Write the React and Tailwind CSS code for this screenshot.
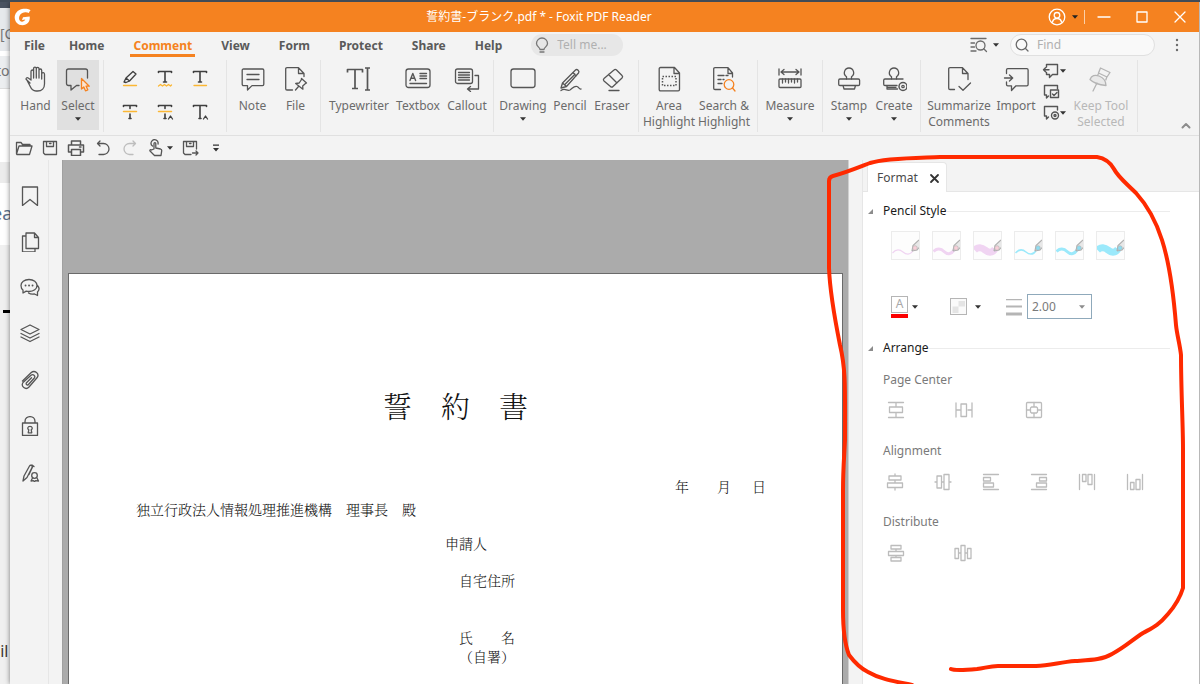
import React from "react";

const INK = "#555555";
const MUTED = "#b4b4b4";
const AMBER = "#fbb734";
const ORANGE = "#f58220";

function Icon({ w = 26, h = 26, color = INK, sw = 1.3, children, className = "" }) {
  return (
    <svg
      width={w}
      height={h}
      viewBox={`0 0 ${w} ${h}`}
      fill="none"
      stroke={color}
      strokeWidth={sw}
      strokeLinecap="round"
      strokeLinejoin="round"
      aria-hidden="true"
      className={`shrink-0 ${className}`}
    >
      {children}
    </svg>
  );
}

function Caret({ color = "#333333" }) {
  return (
    <svg width="6" height="4" viewBox="0 0 6 4" fill={color} aria-hidden="true" className="shrink-0">
      <path d="M0 0.3h6L3 3.8z" />
    </svg>
  );
}

/* ---------- ribbon icons (26 x 26) ---------- */

const HandIcon = () => (
  <Icon>
    <path d="M6 17 2.3 13.6C1.4 12.7 2.8 11 4.2 12L7 14V5.5c0-2 2.6-2 2.6 0V12M9.6 5V2.600c0-2 2.700-2 2.700 0V12M12.300 2.800c0-2 2.700-2 2.700 0V12M15 4.500c0-2 2.700-2 2.700 0V13M17.700 7.800c.5-1.800 2.800-1.300 2.800.5V18c0 4-2.500 7-7 7h-1.500c-3.500 0-4.700-2-6-5L3 14.200" transform="translate(1 0)" />
  </Icon>
);
const SelectIcon = () => (
  <Icon>
    <path d="M14 19.500h-2.500L6 24v-4.500H3.500c-1.200 0-2-.8-2-2V5c0-1.200.8-2 2-2h17c1.200 0 2 .8 2 2v7" />
    <path stroke={ORANGE} fill="#fbe5d3" d="M16.500 12.500v10.500l2.300-2 1.700 3.800 2.300-1-1.700-3.600h3.200z" />
  </Icon>
);
const NoteIcon = () => (
  <Icon>
    <path d="M3.500 3h19c.8 0 1.300.5 1.300 1.300v14c0 .8-.5 1.300-1.300 1.300h-10.500L7.500 24v-4.400h-4c-.8 0-1.300-.5-1.300-1.300v-14c0-.8.5-1.300 1.300-1.300zM7 8.500h12M7 13.500h12" />
  </Icon>
);
const FileIcon = () => (
  <Icon>
    <path d="M9.500 24H4c-.8 0-1.300-.5-1.300-1.300V3c0-.8.5-1.300 1.300-1.300h11.500L21 7.500v3M15.500 1.700v5.800H21" />
    <path d="m18.500 12.500 5 4.500-1.300.7-2.500 2.200.2 3.300-7.200-5.700 3.500-.5 2-3zM15.500 20.500 12.500 24" />
  </Icon>
);
const TypewriterIcon = () => (
  <Icon w={28} sw={1.7}>
    <path strokeLinecap="butt" d="M2.500 6.500V3.500h15v3M10 3.500v19M7 22.500h6M20 2h5M20 24h5M22.500 2v22" />
  </Icon>
);
const TextboxIcon = () => (
  <Icon>
    <rect x="1" y="3" width="24" height="18.500" rx="2.500" />
    <path strokeWidth="1.400" d="m5 14.500 2.800-7 2.800 7M6.200 12.300h3.400M15 7.500h6.500M15 10h6.500M15 12.500h6.500M5 17.500h16.500" />
  </Icon>
);
const CalloutIcon = () => (
  <Icon>
    <rect x="1.500" y="3" width="17" height="14.500" rx="2" />
    <path d="M4.500 6.500h11M4.500 9h11M4.500 11.500h11M4.500 14h11M21 9.500h3.500V23H13.500M16.500 20.500 13.500 23l3 2.500" />
  </Icon>
);
const DrawingIcon = () => (
  <Icon>
    <rect x="1" y="3" width="24" height="18.500" rx="2.500" />
  </Icon>
);
const PencilIcon = () => (
  <Icon>
    <path d="m5.500 17 13-13c1.500-1.500 4.500 1 3 3L9.500 20.500 4 22zM5.500 17l4 3.500M15.800 6.500l3.500 3.300M8.300 18 18 8.200M4 24.500c4-3 6 1 9-.5 2.500-1.500 4-4.500 7-3.500 2 .7 2 3 4 2.500" />
  </Icon>
);
const EraserIcon = () => (
  <Icon>
    <path d="m15 4c.8-.8 1.700-.8 2.500 0l5.500 5.500c.8.8.8 1.700 0 2.500L14 20.500c-.8.800-1.700.8-2.500 0L5 15c-.8-.8-.8-1.700 0-2.500zM9.500 8.500l8.500 8.500M10 24.500h10" />
  </Icon>
);
const AreaIcon = () => (
  <Icon>
    <path d="M4.500 1.500h14L23.500 7v16.500c0 .8-.5 1.300-1.300 1.300H4.500c-.8 0-1.300-.5-1.300-1.300V2.800c0-.8.5-1.300 1.300-1.300zM18 1.500V7.500h5.500" />
    <rect x="6.500" y="10.500" width="13.500" height="9" strokeDasharray="1.500 1.500" strokeLinecap="butt" strokeWidth="1.500" />
  </Icon>
);
const SearchHighlightIcon = () => (
  <Icon>
    <path d="M9.500 23.500H4c-.8 0-1.300-.5-1.300-1.300V3c0-.8.5-1.300 1.300-1.300h13L21.500 7v4M17 1.700V7.500h4.500M7 9.500h6M15 9.500h2M7 13.500h3M12 13.500h1M7 17.500h4" />
    <circle cx="18" cy="18.500" r="4.800" stroke={ORANGE} />
    <path stroke={ORANGE} d="m21.500 22 2.500 3" />
  </Icon>
);
const MeasureIcon = () => (
  <Icon>
    <path d="M2 3v6M24 3v6M4 6h18M7 3.500 4 6l3 2.500M19 3.500 22 6l-3 2.500" />
    <rect x="2" y="13" width="22" height="8.500" rx="1" />
    <path d="M5.500 13v4M8.500 13v3M11.500 13v4M14.500 13v3M17.500 13v4M20.500 13v3" />
  </Icon>
);
const StampIcon = ({ gear }) => (
  <Icon>
    <path d="M10.500 13v-2.300C6.500 8 8.500 2 13 2s6.500 6 2.500 8.700V13" />
    {gear ? (
      <>
        <path d="M16 19.500H4c-.8 0-1.300-.5-1.300-1.300V14.300c0-.8.5-1.300 1.300-1.300h18M6 19.500V23h10.500M6 21.300h9" />
        <circle cx="22" cy="20.500" r="4" strokeWidth="1.500" />
        <circle cx="22" cy="20.500" r="1.200" />
      </>
    ) : (
      <path d="M4 13h18.300c.8 0 1.300.5 1.300 1.300v3.900c0 .8-.5 1.300-1.300 1.300H4c-.8 0-1.300-.5-1.300-1.300v-3.900c0-.8.500-1.300 1.300-1.300zM7 19.500 8 23h10.500l1-3.500" />
    )}
  </Icon>
);
const SummarizeIcon = () => (
  <Icon>
    <path d="M8.500 23.500H4c-.8 0-1.300-.5-1.300-1.300V3c0-.8.500-1.300 1.300-1.300h12.500L22 7.500v6M16.500 1.700v5.800H22M13 20.500l4 3.800L24.500 17" />
  </Icon>
);
const ImportIcon = () => (
  <Icon>
    <path d="M3.500 7.500V4c0-.8.5-1.300 1.300-1.300h19c.8 0 1.300.5 1.300 1.300v14.500c0 .8-.5 1.300-1.300 1.300H13L8.500 24.500v-4.700H4.800c-.8 0-1.300-.5-1.300-1.300V16M1.500 12h8M6.500 9l3.200 3-3.200 3" />
  </Icon>
);
const PinIcon = () => (
  <Icon color={MUTED}>
    <path d="m12.500 2 9.500 4.500-3 4.500-8.500-4zM10.800 7 9.500 9.500M18.800 11l-1 3" />
    <path fill="#e9e9e9" d="M2 13.500c1.500-4 5-5 9-3.500s7 4 7 9.500c-5.500-.5-12-2-16-6z" />
    <path d="M9 17 5 25" />
  </Icon>
);

/* ---------- small comment icons ---------- */

const ExportSmall = () => (
  <Icon w={18} h={16} sw={1.400}>
    <path d="M4.500 4V1.500h11v10h-5L7.500 14.500v-3H4.500V9.500M1.500 6.700h5.500M3.500 4.700l-2 2 2 2" />
  </Icon>
);
const PopupSmall = () => (
  <Icon w={18} h={16} sw={1.400}>
    <path d="M15.500 5V1.500h-13v9.500h2v3l2-2" />
    <rect x="8.500" y="6" width="8" height="7.500" />
    <path d="m10.500 10 1.500 1.500 3-3" />
  </Icon>
);
const ManageSmall = () => (
  <Icon w={18} h={16} sw={1.400}>
    <path d="M15.500 5V1.500h-13v9.500h2v3l2-2" />
    <circle cx="13" cy="10.500" r="3.500" />
    <circle cx="13" cy="10.500" r="1" />
  </Icon>
);

/* ---------- text mark-up icons (18 x 18) ---------- */

const markups = [
  {
    name: "Highlight",
    art: (
      <>
        <path d="m5 9 7-6.500 3 2.500-6.500 7zM5 9l3.500 3M3 13l2-4 3.500 3-3.500 1.500z" />
        <path stroke={AMBER} d="M2.500 16.500h13" />
      </>
    ),
  },
  {
    name: "Squiggly underline",
    art: (
      <>
        <path strokeWidth="1.600" d="M2.500 3.500V2.500h13v1M9 2.500V13M7.500 13h3" />
        <path stroke={AMBER} d="m2.500 17 2-1.500 2 1.500 2-1.500 2 1.500 2-1.500 2 1.500 1-1" />
      </>
    ),
  },
  {
    name: "Underline",
    art: (
      <>
        <path strokeWidth="1.600" d="M2.500 3.500V2.500h13v1M9 2.500V13M7.500 13h3" />
        <path stroke={AMBER} d="M3 16.500h12.500" />
      </>
    ),
  },
  {
    name: "Strikeout",
    art: (
      <>
        <path strokeWidth="1.600" d="M2.500 3.500V2.500h13v1M9 2.500V5.500M9 11v4M8 15.500h2" />
        <path stroke={AMBER} strokeWidth="1.500" d="M2.500 8.500h13" />
      </>
    ),
  },
  {
    name: "Replace text",
    art: (
      <>
        <path strokeWidth="1.600" d="M2.500 3.500V2.500h13v1M9 2.500V5.500M9 11v4M8 15.500h2" />
        <path d="m12.500 16 2-3 2 3" />
        <path stroke={AMBER} strokeWidth="1.500" d="M2.500 8.500h13" />
      </>
    ),
  },
  {
    name: "Insert text",
    art: (
      <>
        <path strokeWidth="1.600" d="M2.500 3.500V2.500h13v1M9 2.500v13M8 15.500h2" />
        <path d="m12.500 16 2-3 2 3" />
      </>
    ),
  },
];

/* ---------- ribbon ---------- */

function Tool({ icon, label, width, caret, active, disabled }) {
  return (
    <button
      type="button"
      disabled={disabled}
      className={`flex h-[70px] flex-col items-center pt-[6px] text-[12px] leading-4 ${width} ${
        active ? "bg-[#e0e0e0]" : ""
      } ${disabled ? "text-[#b8b8b8]" : "text-[#6b6b6b]"}`}
    >
      {icon}
      <span className="mt-[6px] text-center whitespace-pre">{label}</span>
      {caret && (
        <span className="mt-[3px]">
          <Caret />
        </span>
      )}
    </button>
  );
}

function Group({ className = "", children }) {
  return <div className={`flex h-[72px] shrink-0 border-r border-[#e4e4e4] ${className}`}>{children}</div>;
}

function Ribbon() {
  return (
    <div className="flex h-[76px] border-b border-[#e0e0e0]">
      <Group className="w-[94px] pl-1">
        <Tool icon={<HandIcon />} label="Hand" width="w-[43px]" />
        <Tool icon={<SelectIcon />} label="Select" width="w-[42px]" caret active />
      </Group>
      <Group className="w-[123px] justify-center pt-[9px]">
        <div className="grid h-[52px] grid-cols-3 content-between gap-x-[17px]">
          {markups.map((m) => (
            <button key={m.name} type="button" aria-label={m.name} className="block">
              <Icon w={18} h={18} color="#3f3f3f">
                {m.art}
              </Icon>
            </button>
          ))}
        </div>
      </Group>
      <Group className="w-[94px] pl-1">
        <Tool icon={<NoteIcon />} label="Note" width="w-[43px]" />
        <Tool icon={<FileIcon />} label="File" width="w-[43px]" />
      </Group>
      <Group className="w-[173px] pl-2">
        <Tool icon={<TypewriterIcon />} label="Typewriter" width="w-[60px]" />
        <Tool icon={<TextboxIcon />} label="Textbox" width="w-[58px]" />
        <Tool icon={<CalloutIcon />} label="Callout" width="w-[40px]" />
      </Group>
      <Group className="w-[145px] pl-1">
        <Tool icon={<DrawingIcon />} label="Drawing" width="w-[50px]" caret />
        <Tool icon={<PencilIcon />} label="Pencil" width="w-[44px]" />
        <Tool icon={<EraserIcon />} label="Eraser" width="w-[40px]" />
      </Group>
      <Group className="w-[119px] pl-1">
        <Tool icon={<AreaIcon />} label={"Area\nHighlight"} width="w-[52px]" />
        <Tool icon={<SearchHighlightIcon />} label={"Search &\nHighlight"} width="w-[58px]" />
      </Group>
      <Group className="w-[65px] justify-center">
        <Tool icon={<MeasureIcon />} label="Measure" width="w-[60px]" caret />
      </Group>
      <Group className="w-[98px] pl-1">
        <Tool icon={<StampIcon />} label="Stamp" width="w-[44px]" caret />
        <Tool icon={<StampIcon gear />} label="Create" width="w-[46px]" caret />
      </Group>
      <Group className="w-[217px] pl-[3px]">
        <Tool icon={<SummarizeIcon />} label={"Summarize\nComments"} width="w-[70px]" />
        <Tool icon={<ImportIcon />} label="Import" width="w-[44px]" />
        <div className="flex w-[32px] flex-col gap-[5px] pt-[3px] pl-1">
          <button type="button" aria-label="Export comments" className="flex items-center">
            <ExportSmall />
            <Caret />
          </button>
          <button type="button" aria-label="Comment pop-ups" className="flex items-center">
            <PopupSmall />
          </button>
          <button type="button" aria-label="Manage comments" className="flex items-center">
            <ManageSmall />
            <Caret />
          </button>
        </div>
        <Tool icon={<PinIcon />} label={"Keep Tool\nSelected"} width="w-[62px]" disabled />
      </Group>
      <div className="flex flex-1 items-end justify-end pr-2 pb-[6px]">
        <button type="button" aria-label="Collapse ribbon">
          <Icon w={10} h={7} color="#8c8c8c" sw={2}>
            <path d="M1.500 5.500 5 2l3.500 3.500" />
          </Icon>
        </button>
      </div>
    </div>
  );
}

/* ---------- title bar and menu ---------- */

function TitleBar() {
  return (
    <header className="flex h-[30px] items-center bg-[#f58220] text-white">
      <svg width="24" height="20" viewBox="0 0 24 20" aria-hidden="true" className="shrink-0">
        <path
          fill="#fff"
          d="M20.600 3.200C18 1.700 15 1.400 12 2 7.500 3 4.700 6.500 4.700 10.500c0 4.500 3.500 7.700 7.700 7.700 4.800 0 8-3.700 7.300-8.700l-6.700.8-1 2.600 3.300-.3c-.8 1.500-2 2.200-3.500 2.100-2-.2-3-2-2.700-4.200.4-3 3-5.200 6-5.300 1.500-.1 2.700.2 3.700.8.300-1.200 1-2.200 1.800-2.800z"
        />
      </svg>
      <h1 className="flex-1 text-center text-[12px] leading-4">誓約書-ブランク.pdf * - Foxit PDF Reader</h1>
      <div className="flex h-full items-center">
        <button type="button" aria-label="Account" className="flex items-center gap-[6px] pr-[6px] pl-1">
          <Icon w={18} h={18} color="#fff" sw={1.300}>
            <circle cx="9" cy="9" r="7.800" />
            <circle cx="9" cy="7.300" r="2.800" />
            <path d="M4.500 14c.5-2.500 2.300-3.500 4.500-3.500s4 1 4.500 3.500" />
          </Icon>
          <Caret color="#222" />
        </button>
        <span className="h-[14px] w-px bg-[#fbd0a8]" />
        <button type="button" aria-label="Minimize" className="flex w-[38px] justify-center">
          <Icon w={14} h={14} color="#fff">
            <path d="M1 7h12" />
          </Icon>
        </button>
        <button type="button" aria-label="Maximize" className="flex w-[38px] justify-center">
          <Icon w={14} h={14} color="#fff">
            <path d="M2 2h10v10H2z" />
          </Icon>
        </button>
        <button type="button" aria-label="Close" className="flex w-[38px] justify-center">
          <Icon w={14} h={14} color="#fff">
            <path d="m2 2 10 10M12 2 2 12" />
          </Icon>
        </button>
      </div>
    </header>
  );
}

const menus = ["File", "Home", "Comment", "View", "Form", "Protect", "Share", "Help"];

function MenuBar() {
  return (
    <div className="flex h-[28px] items-center pb-[2px]">
      <nav className="flex gap-[23px] pl-[11px]">
        {menus.map((m) => (
          <button
            key={m}
            type="button"
            className={`border-b-[3px] px-[3px] pt-[5px] text-[12px] leading-4 font-bold first:-mr-[5px] ${
              m === "Comment" ? "border-[#f58220] text-[#f58220]" : "border-transparent text-[#5a5a5a]"
            }`}
          >
            {m}
          </button>
        ))}
      </nav>
      <label className="ml-[26px] flex h-[22px] w-[92px] items-center gap-2 rounded-full bg-[#e7e7e7] pl-1">
        <Icon w={14} h={16} color="#777">
          <path d="M5 12.500C5 10.500 1.500 9.500 1.500 6.500a5.500 5.500 0 0 1 11 0c0 3-3.500 4-3.500 6zM5 15h4" />
        </Icon>
        <input
          aria-label="Tell me"
          placeholder="Tell me..."
          className="w-[62px] min-w-0 bg-transparent text-[12px] leading-4 outline-none placeholder:text-[#b0b0b0]"
        />
      </label>
      <div className="ml-auto flex items-center">
        <button type="button" aria-label="Search options" className="mr-[11px] flex items-center gap-[5px]">
          <Icon w={18} h={16} color="#6b6b6b">
            <path d="M1 1.500h15M1 6h3.500M1 10h3.500M1 14h5" />
            <circle cx="10.500" cy="8.500" r="4.500" />
            <path d="m13.700 11.700 2.800 2.800" />
          </Icon>
          <Caret />
        </button>
        <label className="flex h-[22px] w-[145px] items-center gap-2 rounded-full border border-[#e0e0e0] bg-[#f9f9f9] pl-1">
          <Icon w={14} h={14} color="#6b6b6b">
            <circle cx="6.500" cy="6.500" r="5.300" />
            <path d="m10.500 10.500 2.500 2.500" />
          </Icon>
          <input
            aria-label="Find"
            placeholder="Find"
            className="w-[100px] min-w-0 bg-transparent text-[12px] leading-4 outline-none placeholder:text-[#b0b0b0]"
          />
        </label>
        <button type="button" aria-label="More" className="flex w-[44px] justify-center">
          <svg width="4" height="14" viewBox="0 0 4 14" fill="#6b6b6b" aria-hidden="true">
            <circle cx="2" cy="2" r="1.200" />
            <circle cx="2" cy="7" r="1.200" />
            <circle cx="2" cy="12" r="1.200" />
          </svg>
        </button>
      </div>
    </div>
  );
}

/* ---------- quick access bar ---------- */

function QuickBar() {
  const save = "M1.500 1.500h13v13h-11.500l-1.500-1.500zM4.500 1.500v5h7v-5M7.500 3.500h1.500";
  return (
    <div className="flex h-[24px] items-center gap-[9px] pl-[5px]">
      <button type="button" aria-label="Open">
        <Icon w={18} h={16}>
          <path d="M1.500 13.500v-11h4.500l1.500 2h7.500V6M1.500 14 4 6h13l-2.500 8.500H2z" />
        </Icon>
      </button>
      <button type="button" aria-label="Save">
        <Icon w={16} h={16}>
          <path d={save} />
        </Icon>
      </button>
      <button type="button" aria-label="Print">
        <Icon w={18} h={16} sw={1.500}>
          <path d="M4.500 5V1h9v4M4 12H1.500V5h15v7H14M4.500 9.500h9v6h-9zM12.500 7h1.500" />
        </Icon>
      </button>
      <button type="button" aria-label="Undo">
        <Icon w={18} h={16}>
          <path d="M6 1 3.500 3.500 6 6M4 3.500h5.500a5.300 5.300 0 0 1 0 11H5" />
        </Icon>
      </button>
      <button type="button" aria-label="Redo" disabled>
        <Icon w={18} h={16} color="#bdbdbd">
          <path d="M12 1l2.500 2.500L12 6M14 3.500H8.500a5.300 5.300 0 0 0 0 11H12" />
        </Icon>
      </button>
      <button type="button" aria-label="Touch mode" className="flex items-center gap-[3px]">
        <Icon w={16} h={18}>
          <path d="M4.500 7A3.500 3.500 0 1 1 10 5M6 10V4.500c0-1.200 1.800-1.200 1.800 0V9l4.700 1c1 .3 1.300 1 1.200 1.800l-.7 4.700H6.500L2 12c-.5-1 .8-1.700 1.500-1z" />
        </Icon>
        <Caret />
      </button>
      <button type="button" aria-label="Save as">
        <Icon w={18} h={16}>
          <path d="M9 14.500H3L1.500 13V1.500h13V9M4.500 1.500v5h7v-5M7.500 3.500h1.500M10.500 13h5.500M14 11l2 2-2 2" />
        </Icon>
      </button>
      <button type="button" aria-label="Customize" className="ml-1">
        <svg width="6" height="8" viewBox="0 0 6 8" fill="#333" aria-hidden="true">
          <path d="M0 0.500h6v1.200H0zM0 4h6L3 7.500z" />
        </svg>
      </button>
    </div>
  );
}

/* ---------- navigation strip ---------- */

const navItems = [
  { name: "Bookmarks", art: <path d="M2.500 1h15v18.500L10 13.500l-7.500 6z" /> },
  {
    name: "Pages",
    art: <path d="M6 1h8.500l4 4.500V16.500H6zM14.500 1v4.500h4M6 4H2.500v16H15v-3.500" />,
  },
  {
    name: "Comments",
    art: (
      <>
        <path d="M9 1.500c4.700 0 8 2.500 8 6s-3.300 6-8 6c-1 0-2-.1-2.800-.4L3 15v-3C1.500 11 1 9 1 7.500c0-3.500 3.300-6 8-6zM17.500 7.500c2.300 2.500 1.500 5 0 6.500v3.500L14.500 16c-3 .5-5-.3-6-1" />
        <path strokeWidth="1.800" d="M5.500 7.500h.1M9 7.500h.1M12.500 7.500h.1" />
      </>
    ),
  },
  { name: "Layers", art: <path d="m10 1 9 4.500L10 10 1 5.500zM1 9.500l9 4.500 9-4.500M1 13l9 4.500 9-4.500" /> },
  {
    name: "Attachments",
    art: (
      <path d="M2.500 11 11 2.800c3.700-3.300 9 1 6 5L9 17c-3.300 3.500-8.500-.5-6-4.500L11 5.300c2.200-1.700 4.800.7 3.300 2.700l-6.300 7M14.300 8 8.500 14.500c-1.500 1.300-3-.3-2-1.800l5-5" />
    ),
  },
  {
    name: "Security",
    art: (
      <path d="M2.500 7h15v12.500h-15zM5 7V5.500c0-6.500 10-6.500 10 0V7M10 10.300c2.700 0 2.700 2.700 1.200 3.500l.6 3H8.200l.6-3c-1.500-.8-1.500-3.500 1.200-3.500z" />
    ),
  },
  {
    name: "Signatures",
    art: (
      <>
        <path d="m3 19 1-5L9.500 4c1-1.500 3.500-.5 2.500 1.500L7 15.500zM13 4 9 12.500M12 3l2 1.500" />
        <circle cx="14.500" cy="13.500" r="2.800" />
        <path d="m12.500 16-1.500 3 2.500-.3 1 1 1-1 3 .3-1.500-3" />
      </>
    ),
  },
];

function NavStrip() {
  return (
    <nav className="flex w-[39px] shrink-0 flex-col items-center gap-[26px] border-r border-[#e6e6e6] pt-[26px] pl-[2px]">
      {navItems.map((n) => (
        <button key={n.name} type="button" aria-label={n.name} className="block">
          <Icon w={20} h={20}>
            {n.art}
          </Icon>
        </button>
      ))}
    </nav>
  );
}

/* ---------- document ---------- */

function DocumentView() {
  return (
    <main className="flex min-w-0 flex-1 flex-col border-l border-[#a0a0a0] bg-[#ababab] px-[5px] pt-[113px] text-[#111111]">
      <article className="flex-1 border border-b-0 border-[#6a6a6a] bg-white pt-[112px] font-light [font-family:'Noto_Serif_CJK_JP','Noto_Sans_CJK_JP',serif]">
        <h2 className="text-center text-[29px] leading-[40px]">誓　約　書</h2>
        <div className="flex justify-end pt-[50px] pr-[76px] text-[14px] leading-[20px]">
          <span>年　　月</span>
          <span className="pl-[21px]">日</span>
        </div>
        <p className="pt-[3px] pl-[67px] text-[14px] leading-[20px]">独立行政法人情報処理推進機構　理事長　殿</p>
        <p className="pt-[14px] pl-[376px] text-[14px] leading-[20px]">申請人</p>
        <p className="pt-[17px] pl-[390px] text-[14px] leading-[20px]">自宅住所</p>
        <p className="pt-[37px] pl-[390px] text-[14px] leading-[20px]">氏　　名</p>
        <p className="pl-[390px] text-[14px] leading-[18px]">（自署）</p>
      </article>
    </main>
  );
}

/* ---------- format panel ---------- */

const pencilStyles = [
  { name: "Thin pink", color: "#f0d4f2", width: 1.2, tip: "#f8cfd8", wave: "M0.500 21C4 17 8 17.500 11 20s7 3.500 10-1.500" },
  { name: "Medium pink", color: "#f0d4f2", width: 3, tip: "#f8cfd8", wave: "M0.500 19.500C4 16 8 16.500 11 19.500s7 3.500 10-1.500" },
  { name: "Thick pink", color: "#f0d4f2", width: 7, tip: "#f8cfd8", wave: "M0.500 18C4 14.500 8 15.500 11 18s7 3.500 10-1" },
  { name: "Thin cyan", color: "#9be9fb", width: 1.5, tip: "#8fdcf0", wave: "M0.500 21C4 17 8 17.500 11 20s7 3.500 10-1.500" },
  { name: "Medium cyan", color: "#9be9fb", width: 3, tip: "#8fdcf0", wave: "M0.500 19.500C4 16 8 16.500 11 19.500s7 3.500 10-1.500" },
  { name: "Thick cyan", color: "#9be9fb", width: 7, tip: "#8fdcf0", wave: "M0.500 18C4 14.500 8 15.500 11 18s7 3.500 10-1" },
];

function PencilSwatch({ item }) {
  return (
    <button type="button" aria-label={item.name} className="block size-[29px] border border-[#ececec] bg-[#fdfdfd]">
      <svg width="27" height="27" viewBox="0 0 27 27" fill="none" aria-hidden="true">
        <path d={item.wave} stroke={item.color} strokeWidth={item.width} />
        <path d="M21.500 13.500 27 8.500v6.500l-2 2.500z" fill="#e8e8e8" />
        <path d="M20 19l1-5.500L27 8M20 19l5-1 2-2.500" stroke="#b0b0b0" strokeWidth="1.200" />
        <circle cx="23" cy="16" r="2.300" fill={item.tip} stroke="#b0b0b0" strokeWidth="0.600" />
      </svg>
    </button>
  );
}

function SectionHeading({ children }) {
  return (
    <div className="flex items-center">
      <svg width="5" height="5" viewBox="0 0 5 5" fill="#8c8c8c" aria-hidden="true">
        <path d="M5 0v5H0z" />
      </svg>
      <h3 className="pl-[10px] text-[12px] leading-4 text-[#1a1a1a]">{children}</h3>
      <span className="h-px flex-1 bg-[#ececec]" />
    </div>
  );
}

const arrange = {
  centerV: <path d="M1.500 1.500h15M1.500 16.500h15M9 1.500v4M9 12.500v4M2.500 6h13v5.500h-13z" />,
  centerH: <path d="M1 2v14M17 2v14M1 9h4M13 9h4M6 3h5.500v12.500H6z" />,
  centerBoth: (
    <>
      <rect x="1.500" y="1.500" width="15" height="15" rx="1" />
      <path d="M9 1.500v4M9 12.500v4M1.500 9h4M12.500 9h4M6.500 6h5l1 1v4l-1 1h-5l-1-1V7z" />
    </>
  ),
  alignV: <path d="M9 1v2M9 7v3M9 15v2M3 3h12v4H3zM1.500 10h15v4.500h-15z" />,
  alignH: <path d="M1 9h2M8 9h2M15 9h2M3 3h4.500v12H3zM10 1.500h5v15h-5z" />,
  left: <path d="M1.500 1.500h15M1.500 16.500h15M1.500 4.500h7v3.500h-7zM1.500 10h10v4h-10z" />,
  right: <path d="M1.500 1.500h15M1.500 16.500h15M9.500 4.500h7v3.500h-7zM6.500 10h10v4h-10z" />,
  top: <path d="M1.500 1.500v15M16.500 1.500v15M4.500 1.500H8v7H4.500zM10 1.500h4v10h-4z" />,
  bottom: <path d="M1.500 1.500v15M16.500 1.500v15M4.500 9.500H8v7H4.500zM10 6.500h4v10h-4z" />,
  distV: <path d="M4 1.500h10v3.500H4zM1.500 7.500h15v4h-15zM4 13.500h10V17H4zM9 5v2.500M9 11.500v2" />,
  distH: <path d="M1 4.500h3.500v10H1zM7 1.500h4v15H7zM13.500 4.500H17v10h-3.500zM4.500 9H7M11 9h2.500" />,
};

function ArrangeButton({ kind, name }) {
  return (
    <button type="button" disabled aria-label={name} className="block">
      <Icon w={18} h={18} color="#bcbcbc">
        {arrange[kind]}
      </Icon>
    </button>
  );
}

function FormatPanel() {
  return (
    <aside className="flex w-[337px] shrink-0 flex-col border-l border-[#e6e6e6] bg-white">
      <div className="flex h-[32px] items-end border-b border-[#e6e6e6] bg-[#f3f3f3] pl-1">
        <div className="-mb-px flex h-[30px] w-[80px] items-center justify-between rounded-t-[4px] border border-b-0 border-[#e6e6e6] bg-white pt-px pr-[6px] pl-[9px]">
          <span className="text-[12px] leading-4 text-[#4a4a4a]">Format</span>
          <button type="button" aria-label="Close panel">
            <Icon w={11} h={11} color="#333" sw={1.800}>
              <path d="m2 2 7 7M9 2 2 9" />
            </Icon>
          </button>
        </div>
      </div>
      <div className="pt-[11px] pr-[29px] pl-[5px]">
        <SectionHeading>Pencil Style</SectionHeading>
        <div className="flex gap-3 pt-3 pl-[23px]">
          {pencilStyles.map((p) => (
            <PencilSwatch key={p.name} item={p} />
          ))}
        </div>
        <div className="flex items-center pt-[34px] pl-[23px]">
          <button type="button" aria-label="Color" className="flex items-center gap-1">
            <span className="flex flex-col gap-px">
              <span className="flex h-[17px] w-[17px] items-center justify-center border border-[#b5b5b5] text-[12px] leading-none text-[#a8a8a8]">
                A
              </span>
              <span className="h-1 w-[17px] bg-[#fb0000]" />
            </span>
            <Caret />
          </button>
          <button type="button" aria-label="Opacity" className="ml-[32px] flex items-center gap-2">
            <svg width="17" height="17" viewBox="0 0 17 17" aria-hidden="true">
              <rect x="0.500" y="0.500" width="16" height="16" fill="#fafafa" stroke="#b5b5b5" />
              <path fill="#e4e4e4" d="M8.500 3H15v5.500H8.500zM2.500 8.500h6V15h-6z" />
            </svg>
            <Caret />
          </button>
          <label className="ml-6 flex items-center gap-1">
            <svg width="18" height="18" viewBox="0 0 18 18" fill="#b5b5b5" aria-hidden="true">
              <path d="M1 1h16v1.300H1zM1 7.500h16v2H1zM1 14.500h16v3H1z" />
            </svg>
            <span className="relative flex">
              <select
                aria-label="Line width"
                defaultValue="2.00"
                className="h-[25px] w-[65px] appearance-none border border-[#8fa9bb] bg-white pl-1 text-[12px] leading-4 text-[#7a7a7a]"
              >
                <option>1.00</option>
                <option>2.00</option>
                <option>3.00</option>
              </select>
              <span className="pointer-events-none absolute top-[11px] right-[7px] flex">
                <Caret color="#8c8c8c" />
              </span>
            </span>
          </label>
        </div>
        <div className="pt-[21px]">
          <SectionHeading>Arrange</SectionHeading>
        </div>
        <div className="pl-[15px] text-[12px] leading-4 text-[#7a7a7a]">
          <h4 className="pt-4">Page Center</h4>
          <div className="flex pt-[13px] pl-1">
            <ArrangeButton kind="centerV" name="Center vertically" />
            <span className="pl-[50px]">
              <ArrangeButton kind="centerH" name="Center horizontally" />
            </span>
            <span className="pl-[52px]">
              <ArrangeButton kind="centerBoth" name="Center both" />
            </span>
          </div>
          <h4 className="pt-6">Alignment</h4>
          <div className="flex gap-[30px] pt-[14px] pl-[3px]">
            <ArrangeButton kind="alignV" name="Align center vertically" />
            <ArrangeButton kind="alignH" name="Align center horizontally" />
            <ArrangeButton kind="left" name="Align left" />
            <ArrangeButton kind="right" name="Align right" />
            <ArrangeButton kind="top" name="Align top" />
            <ArrangeButton kind="bottom" name="Align bottom" />
          </div>
          <h4 className="pt-[23px]">Distribute</h4>
          <div className="flex gap-[49px] pt-[14px] pl-1">
            <ArrangeButton kind="distV" name="Distribute vertically" />
            <ArrangeButton kind="distH" name="Distribute horizontally" />
          </div>
        </div>
      </div>
    </aside>
  );
}

/* ---------- window behind and pen annotation ---------- */

function Backdrop() {
  return (
    <div className="flex w-[10px] shrink-0 flex-col overflow-hidden bg-[#f0f0f0] text-[14px] leading-5 whitespace-nowrap text-[#777]">
      <div className="h-[6px] bg-[#4a5361]" />
      <div className="h-[43px] bg-[#e6e9ec] pt-[16px]">[C</div>
      <div className="h-[5px] bg-white" />
      <div className="h-[32px] bg-[#eceef0] pt-[5px]">
        <div className="-ml-1">to</div>
      </div>
      <div className="h-[74px] border-t border-[#ddd] bg-white" />
      <div className="h-[21px] bg-[#ececec]" />
      <div className="h-[62px] bg-white pt-[20px] text-[18px] text-[#5b6f8c]">
        <div className="-ml-2">ea</div>
      </div>
      <div className="mt-[65px] ml-[3px] h-[3px] bg-black" />
      <div className="mt-auto pb-[23px] text-[16px] text-[#3b3630]">
        <div className="-ml-1">lil</div>
      </div>
    </div>
  );
}

function PenStroke() {
  return (
    <svg
      width="400"
      height="684"
      viewBox="800 0 400 684"
      fill="none"
      stroke="#ff2a00"
      strokeWidth="4"
      strokeLinecap="round"
      strokeLinejoin="round"
      aria-hidden="true"
      className="pointer-events-none absolute -top-[2px] right-0"
    >
      <path d="M951 669C955 671 966 670 977 669C985 668 990 666 998 666H1036C1050 666 1060 662 1075 661C1090 660 1102 660 1112 654C1125 647 1132 640 1143 633C1152 628 1158 626 1168 614C1175 606 1180 598 1183 588V448C1183 425 1181 390 1181 355C1180 345 1177 335 1176 325C1174 300 1170 265 1162 240C1155 218 1146 204 1136 193C1126 183 1118 177 1114 169C1109 160 1103 158 1097 157H940C915 158 885 158 870 163C857 168 845 173 833 176Q829 177 829 181V268C830 295 836 325 840 345C846 370 845 390 845 440C844 460 843 470 843 490V610C843 630 845 645 849 655C855 663 860 668 868 672C880 679 893 681 912 685" />
    </svg>
  );
}

export default function App() {
  return (
    <div className="relative flex min-h-screen flex-col overflow-hidden border-t-2 border-[#414b57] [font-family:'Noto_Sans','Noto_Sans_CJK_JP',sans-serif]">
      <div className="flex flex-1">
        <Backdrop />
        <div className="z-0 flex min-w-0 flex-1 flex-col border-r border-[#b8b8b8] bg-[#f3f3f3] shadow-[0_0_5px_rgba(0,0,0,0.5)]">
          <TitleBar />
          <MenuBar />
          <Ribbon />
          <QuickBar />
          <div className="flex flex-1">
            <NavStrip />
            <div className="w-[13px] shrink-0" />
            <DocumentView />
            <div className="w-[14px] shrink-0 border-l border-[#d0d0d0]" />
            <FormatPanel />
          </div>
        </div>
      </div>
      <PenStroke />
    </div>
  );
}
